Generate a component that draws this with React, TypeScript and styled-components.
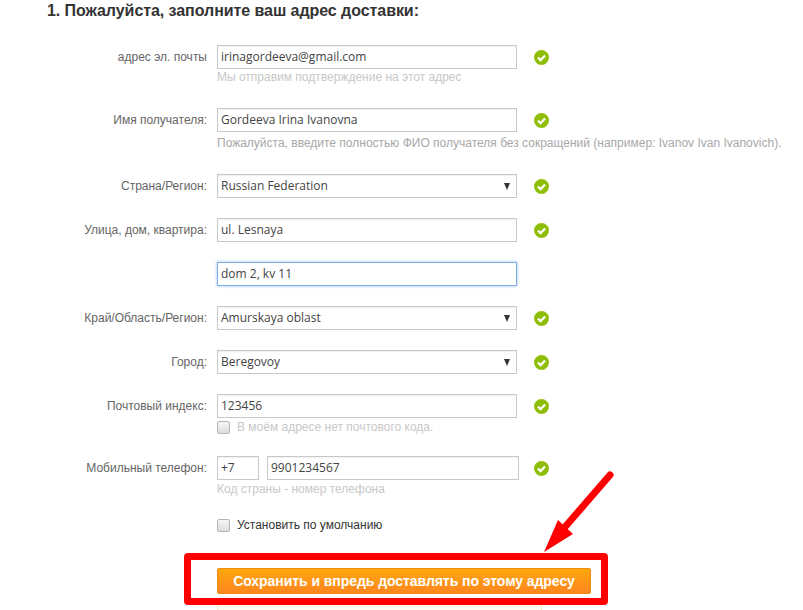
import React from "react";
import styled, { createGlobalStyle } from "styled-components";

const GlobalStyle = createGlobalStyle`
  html, body {
    margin: 0;
    padding: 0;
    background: #fff;
    overflow: hidden;
  }
`;

const Page = styled.div`
  position: relative;
  width: 803px;
  height: 610px;
  overflow: hidden;
  font-family: "Liberation Sans", Arial, sans-serif;
  font-size: 12px;
`;

const Heading = styled.h2`
  margin: 0;
  padding: 2px 0 0 47px;
  height: 45px;
  box-sizing: border-box;
  font-size: 16px;
  line-height: 18px;
  font-weight: 700;
  letter-spacing: -0.06px;
  color: #333;
`;

const Row = styled.div<{ $height: number }>`
  display: grid;
  grid-template-columns: 207px 1fr;
  column-gap: 10px;
  height: ${(p) => p.$height}px;
`;

const Label = styled.div`
  height: 24px;
  line-height: 25px;
  text-align: right;
  color: #666;
  white-space: nowrap;
`;

const Controls = styled.div`
  display: flex;
  flex-direction: column;
  align-items: flex-start;
`;

const FieldLine = styled.div`
  display: flex;
  align-items: center;
`;

const Field = styled.div<{ $width?: number; $focused?: boolean }>`
  box-sizing: border-box;
  position: relative;
  width: ${(p) => p.$width ?? 300}px;
  height: 24px;
  padding: 0 3px;
  line-height: 22px;
  font-family: "Open Sans", sans-serif;
  font-size: 12px;
  color: #444;
  background: #fff;
  border: 1px solid ${(p) => (p.$focused ? "#7fb0e6" : "#c8c8c8")};
  box-shadow: ${(p) => (p.$focused ? "0 0 3px rgba(90, 150, 230, 0.6)" : "inset 0 1px 1px #f2f2f2")};

  & + & {
    margin-left: 8px;
  }
`;

const Arrow = styled.span`
  position: absolute;
  right: 6px;
  top: 8px;
  width: 0;
  height: 0;
  border-left: 3.5px solid transparent;
  border-right: 3.5px solid transparent;
  border-top: 7px solid #333;
`;

const Check = styled.svg<{ $offset: number }>`
  display: block;
  width: 15px;
  height: 15px;
  margin-left: ${(p) => p.$offset}px;
  margin-top: 1px;
  flex: none;
`;

const Hint = styled.div<{ $muted?: boolean; $gap?: number }>`
  margin-top: ${(p) => p.$gap ?? 0}px;
  line-height: 16px;
  color: ${(p) => (p.$muted ? "#c8c8c8" : "#a8a8a8")};
  white-space: nowrap;
`;

const CheckRow = styled.label<{ $muted?: boolean }>`
  display: flex;
  align-items: center;
  gap: 7px;
  height: 14px;
  color: ${(p) => (p.$muted ? "#c8c8c8" : "#333")};
  white-space: nowrap;
`;

const Box = styled.span`
  box-sizing: border-box;
  width: 13px;
  height: 13px;
  border: 1px solid #b5b5b5;
  border-radius: 2px;
  background: linear-gradient(#f6f6f6, #dcdcdc);
`;

const SubmitBlock = styled.div`
  padding-left: 217px;
`;

const SubmitButton = styled.button`
  display: block;
  box-sizing: border-box;
  width: 374px;
  height: 26px;
  padding: 0;
  font-family: "Liberation Sans", Arial, sans-serif;
  font-size: 14px;
  font-weight: 700;
  letter-spacing: -0.06px;
  color: #fff;
  background: linear-gradient(#ffa70d, #fd861f);
  border: 1px solid #ee8a12;
  border-radius: 2px;
`;

const NoticeBox = styled.div`
  width: 323px;
  height: 20px;
  margin-top: 5px;
  background: #fffdf2;
  border: 1px solid #f6ecc8;
`;

const RedFrame = styled.div`
  position: absolute;
  left: 184px;
  top: 553px;
  width: 424px;
  height: 52px;
  box-sizing: border-box;
  border: 7px solid #ff0000;
  border-radius: 4px;
`;

const ArrowDrawing = styled.svg`
  position: absolute;
  left: 535px;
  top: 465px;
`;

const OkIcon = ({ offset = 17 }: { offset?: number }) => (
  <Check $offset={offset} viewBox="0 0 16 16">
    <circle cx="8" cy="8" r="8" fill="#8fbe08" />
    <path d="M4.2 8.2 7 10.8 11.8 5.8" fill="none" stroke="#fff" strokeWidth="2.4" />
  </Check>
);

const App: React.FC = () => (
  <Page>
    <GlobalStyle />
    <Heading>1. Пожалуйста, заполните ваш адрес доставки:</Heading>

    <Row $height={63}>
      <Label>адрес эл. почты</Label>
      <Controls>
        <FieldLine>
          <Field>irinagordeeva@gmail.com</Field>
          <OkIcon />
        </FieldLine>
        <Hint $muted>Мы отправим подтверждение на этот адрес</Hint>
      </Controls>
    </Row>

    <Row $height={66}>
      <Label>Имя получателя:</Label>
      <Controls>
        <FieldLine>
          <Field>Gordeeva Irina Ivanovna</Field>
          <OkIcon />
        </FieldLine>
        <Hint $gap={3}>Пожалуйста, введите полностью ФИО получателя без сокращений (например: Ivanov Ivan Ivanovich).</Hint>
      </Controls>
    </Row>

    <Row $height={44}>
      <Label>Страна/Регион:</Label>
      <Controls>
        <FieldLine>
          <Field>Russian Federation<Arrow /></Field>
          <OkIcon />
        </FieldLine>
      </Controls>
    </Row>

    <Row $height={44}>
      <Label>Улица, дом, квартира:</Label>
      <Controls>
        <FieldLine>
          <Field>ul. Lesnaya</Field>
          <OkIcon />
        </FieldLine>
      </Controls>
    </Row>

    <Row $height={44}>
      <Label />
      <Controls>
        <Field $focused>dom 2, kv 11</Field>
      </Controls>
    </Row>

    <Row $height={44}>
      <Label>Край/Область/Регион:</Label>
      <Controls>
        <FieldLine>
          <Field>Amurskaya oblast<Arrow /></Field>
          <OkIcon />
        </FieldLine>
      </Controls>
    </Row>

    <Row $height={44}>
      <Label>Город:</Label>
      <Controls>
        <FieldLine>
          <Field>Beregovoy<Arrow /></Field>
          <OkIcon />
        </FieldLine>
      </Controls>
    </Row>

    <Row $height={62}>
      <Label>Почтовый индекс:</Label>
      <Controls>
        <FieldLine>
          <Field>123456</Field>
          <OkIcon />
        </FieldLine>
        <Hint $muted $gap={2}>
          <CheckRow $muted><Box />В моём адресе нет почтового кода.</CheckRow>
        </Hint>
      </Controls>
    </Row>

    <Row $height={62}>
      <Label>Мобильный телефон:</Label>
      <Controls>
        <FieldLine>
          <Field $width={42}>+7</Field>
          <Field $width={252}>9901234567</Field>
          <OkIcon offset={15} />
        </FieldLine>
        <Hint $muted $gap={1}>Код страны - номер телефона</Hint>
      </Controls>
    </Row>

    <Row $height={50}>
      <Label />
      <Controls>
        <CheckRow><Box />Установить по умолчанию</CheckRow>
      </Controls>
    </Row>

    <SubmitBlock>
      <SubmitButton>Сохранить и впредь доставлять по этому адресу</SubmitButton>
      <NoticeBox />
    </SubmitBlock>

    <RedFrame />
    <ArrowDrawing width="90" height="92" viewBox="0 0 90 92">
      <line x1="75" y1="10" x2="30" y2="62" stroke="#ff0000" strokeWidth="7" strokeLinecap="round" />
      <polygon points="9,87 23,55 38,69" fill="#ff0000" />
    </ArrowDrawing>
  </Page>
);

export default App;
